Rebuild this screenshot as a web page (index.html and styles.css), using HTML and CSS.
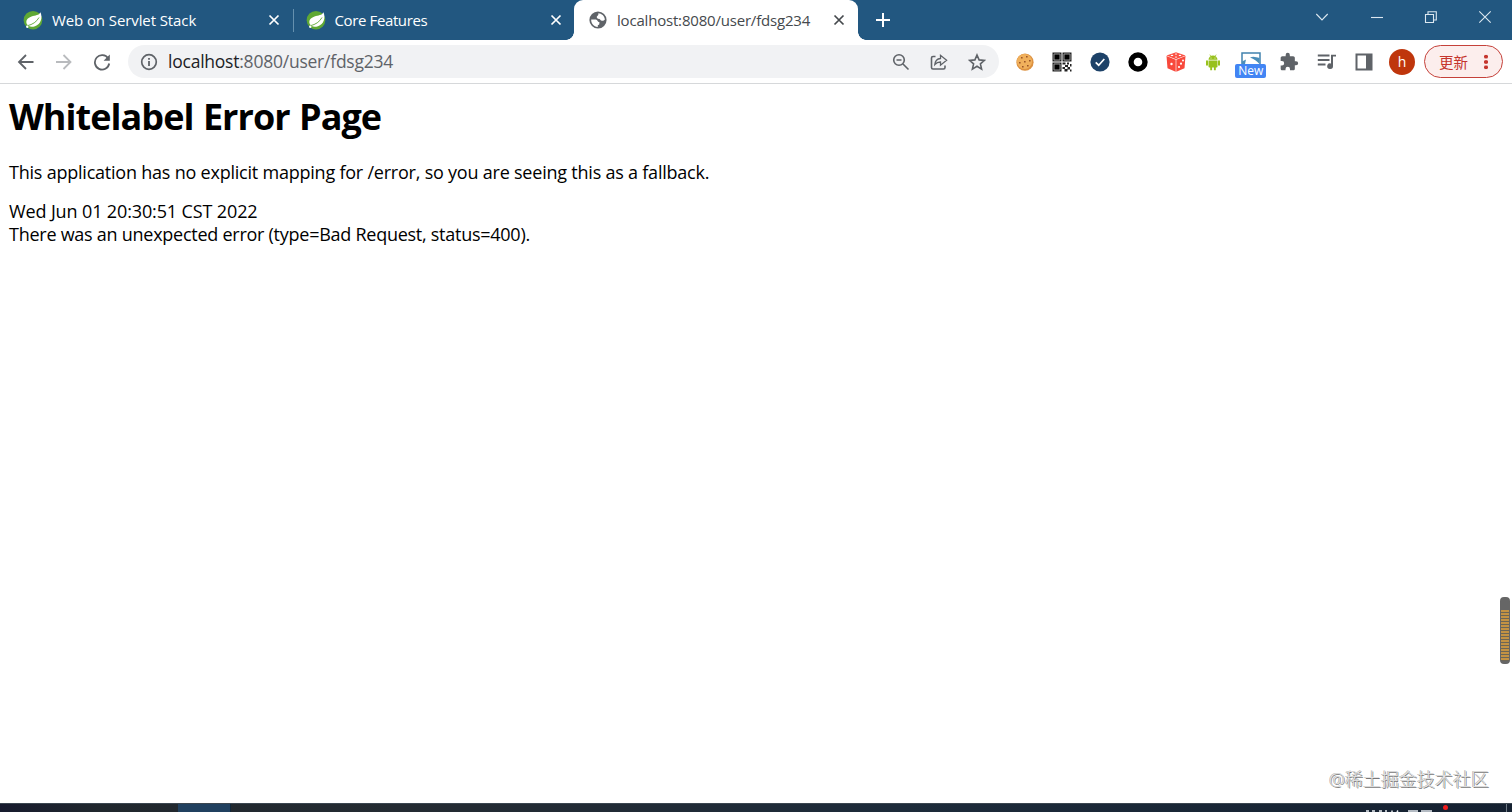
FILE: index.html
```
<!DOCTYPE html>
<html lang="en">
<head>
  <meta charset="UTF-8">
  <meta name="viewport" content="width=device-width, initial-scale=1.0">
  <title>localhost:8080/user/fdsg234</title>
  <link rel="stylesheet" href="styles.css">
</head>
<body>
  <svg class="defs">
    <symbol id="spring" viewBox="0 0 20 20">
      <circle cx="10" cy="10.200" r="9.300" fill="#5fa834"/>
      <path d="M17.500 2.200C15.800 5.600 12.500 5 8.500 6.500C4 8 2.300 11.200 4 14.300C5.200 16.800 8.500 17.200 12 16.200C17.900 14 19.800 8 17.500 2.200Z" fill="#fff"/>
      <path d="M4.500 15.700C9.500 14.500 13.500 12 16 7.500" fill="none" stroke="#5fa834" stroke-width=".9"/>
      <circle cx="4.300" cy="16.800" r="1.200" fill="#fff"/>
    </symbol>
    <symbol id="cross" viewBox="0 0 12 12">
      <path d="M1.500 1.500L10.500 10.500M10.500 1.500L1.500 10.500" fill="none" stroke="currentColor" stroke-width="1.700"/>
    </symbol>
  </svg>

  <div class="tabs">
    <div class="tab">
      <svg class="favicon"><use href="#spring"/></svg>
      <span class="title t1">Web on Servlet Stack</span>
      <svg class="close"><use href="#cross"/></svg>
    </div>
    <div class="tab line">
      <svg class="favicon"><use href="#spring"/></svg>
      <span class="title t2">Core Features</span>
      <svg class="close"><use href="#cross"/></svg>
    </div>
    <div class="tab active">
      <svg class="favicon" viewBox="0 0 20 20">
        <circle cx="10" cy="10" r="8.600" fill="#5f6368"/>
        <path d="M3.200 9.500H7.800C9.800 9.700 9.200 12 11.500 12.300L11.200 14.500L9.800 15.200V16.900C5.800 16.700 3 13.500 3.200 9.500Z" fill="#fff"/>
        <path d="M10.300 3.300C13.700 3.500 16.500 6 16.900 9.500C15.500 11.500 13 11 12.300 9.700C11.600 8.500 8.800 9 8.800 7.200C8.800 5.500 10.800 6 10.300 3.300Z" fill="#fff"/>
      </svg>
      <span class="title t3">localhost:8080/user/fdsg234</span>
      <svg class="close"><use href="#cross"/></svg>
    </div>
    <svg class="plus" viewBox="0 0 14 14"><path d="M7 0V14M0 7H14" stroke="#fff" stroke-width="2"/></svg>
    <div class="window-buttons">
      <svg viewBox="0 0 14 14"><path d="M1.300 4L7 10L12.700 4"/></svg>
      <svg viewBox="0 0 14 14"><path d="M1 7.500H13"/></svg>
      <svg viewBox="0 0 14 14"><path d="M1.500 4.500H9.500V12.500H1.500ZM4 4.500V1.800H12.300V10H9.500"/></svg>
      <svg viewBox="0 0 14 14"><path d="M1.300 1.300L12.700 12.700M12.700 1.300L1.300 12.700"/></svg>
    </div>
  </div>

  <div class="toolbar">
    <div class="nav">
      <svg viewBox="0 0 18 18" stroke="#5f6368"><path d="M16.500 9H2M9 2L2 9L9 16"/></svg>
      <svg viewBox="0 0 18 18" stroke="#b9bbbe"><path d="M1 9H15.500M8.500 2L15.500 9L8.500 16"/></svg>
      <svg viewBox="0 0 18 18" stroke="#5f6368"><path d="M15.200 5.500A7.200 7.200 0 1 0 16.200 10.500"/><path d="M16.800 1.500V7.700H10.600Z" fill="#5f6368" stroke="none"/></svg>
    </div>
    <div class="address">
      <svg class="info" viewBox="0 0 18 18"><circle cx="9" cy="9" r="7.300" fill="none" stroke="#5f6368" stroke-width="1.700"/><path d="M9 8V13M9 4.900V6.700" stroke="#5f6368" stroke-width="1.800"/></svg>
      <span class="url"><b>localhost</b>:8080/user/fdsg234</span>
      <div class="actions">
        <svg viewBox="0 0 18 18"><circle cx="7" cy="7" r="5.300"/><path d="M11 11L16.500 16.500M4.500 7H9.500"/></svg>
        <svg viewBox="0 0 18 18"><path d="M5.500 3.500H3A1.500 1.500 0 0 0 1.500 5V14.500A1.500 1.500 0 0 0 3 16H13.500A1.500 1.500 0 0 0 15 14.500V12.500"/><path d="M4.800 11.500C5.200 7.500 7.500 5.800 10.500 5.500V2.300L16.600 7.300L10.500 12.200V9C8 9 6.300 9.800 4.800 11.500Z" stroke-width="1.300"/></svg>
        <svg viewBox="0 0 18 18"><path d="M9 2L11.100 6.900L16.400 7.400L12.400 10.900L13.600 16.100L9 13.300L4.400 16.100L5.600 10.900L1.600 7.400L6.900 6.900Z"/></svg>
      </div>
    </div>
    <div class="extensions">
      <div><svg viewBox="0 0 20 20">
        <circle cx="10" cy="10.200" r="8.600" fill="#dc9140"/><circle cx="9.500" cy="9.500" r="7.600" fill="#f0b05c"/>
        <path d="M6 5h1.600v1.600H6zM11 4h1.600v1.600h-1.600zM4 10h1.600v1.600H4zM9 9h1.600v1.600H9zM14 8h1.600v1.600h-1.600zM7 14h1.600v1.600H7zM12 13h1.600v1.600h-1.600z" fill="#9a5426"/>
      </svg></div>
      <div><svg viewBox="0 0 20 20">
        <path d="M.5.500H9.500V9.500H.5ZM10.500.500H19.500V9.500H10.500ZM.5 10.500H9.500V19.500H.5Z" fill="#222"/>
        <path d="M2 2H8V8H2ZM12 2H18V8H12ZM2 12H8V18H2Z" fill="#000" stroke="#999" stroke-width="1"/>
        <path d="M10.500 10.500h3v2h-3zM15 10.500h2v2h-2zM18 12h1.500v2.500H18zM13 13h3v2h-3zM10.500 15h2.500v2h-2.500zM15.500 15h2.500v2.500h-2.500zM12.500 17h3v2.500h-3zM18 17.500h1.500v2H18z" fill="#222"/>
      </svg></div>
      <div><svg viewBox="0 0 20 20"><circle cx="10" cy="10" r="9.600" fill="#1d4268"/><path d="M5.700 10.300L8.700 13.200L14.300 7" fill="none" stroke="#fff" stroke-width="1.700"/></svg></div>
      <div><svg viewBox="0 0 20 20"><circle cx="10" cy="10" r="7" fill="#fff" stroke="#000" stroke-width="5.400"/></svg></div>
      <div><svg viewBox="0 0 20 20">
        <path d="M10 .3L19.500 3.400L10 7.200L.5 3.400Z" fill="#fb5144"/>
        <path d="M.5 4L9.700 7.700V19.800L1.500 16.300Z" fill="#f8493c"/>
        <path d="M19.500 4L10.300 7.700V19.800L18.500 16.300Z" fill="#f8493c"/>
        <g fill="#fff"><ellipse cx="6" cy="3.400" rx="1.300" ry=".7"/><ellipse cx="10" cy="2" rx="1.200" ry=".6"/><ellipse cx="14" cy="3.400" rx="1.300" ry=".7"/><ellipse cx="10" cy="5" rx="1.200" ry=".6"/><circle cx="5.500" cy="12" r="1.200"/><circle cx="13" cy="15" r="1.100"/><circle cx="15" cy="11.700" r="1.100"/><circle cx="17" cy="8.500" r="1"/></g>
      </svg></div>
      <div><svg viewBox="0 0 20 20" fill="#98c11d">
        <path d="M5.500 7.700A4.500 4.300 0 0 1 14.500 7.700ZM5.500 8.400H14.500V14.500A1 1 0 0 1 13.500 15.500H12.800V18.200H10.900V15.500H9.100V18.200H7.200V15.500H6.500A1 1 0 0 1 5.500 14.500Z"/>
        <rect x="3" y="8.300" width="2" height="5.500" rx="1"/><rect x="15" y="8.300" width="2" height="5.500" rx="1"/>
        <path d="M6.800 2.600L8 4.500M13.200 2.600L12 4.500" stroke="#98c11d" stroke-width=".7"/><circle cx="8" cy="6" r=".5" fill="#fff"/><circle cx="12" cy="6" r=".5" fill="#fff"/>
      </svg></div>
      <div class="picture"><svg viewBox="0 0 20 20">
        <path d="M1 1H19V13H1Z" fill="#fff" stroke="#4183ae" stroke-width="1.500"/>
        <path d="M1 12V9.500L5 7.500L4 12ZM9 5.500C13 4 15 5.500 18.500 6V12C16 9 13 7 9 5.500Z" fill="#4b8eb9"/>
      </svg><span class="badge">New</span></div>
      <div><svg viewBox="0 0 24 24"><path fill="#5f6368" d="M20.500 11H19V7c0-1.100-.9-2-2-2h-4V3.500a2.500 2.500 0 0 0-5 0V5H4c-1.100 0-2 .9-2 2v3.800h1.500a2.700 2.700 0 0 1 0 5.400H2V20c0 1.100.9 2 2 2h3.800v-1.500a2.700 2.700 0 0 1 5.400 0V22H17c1.100 0 2-.9 2-2v-4h1.500a2.500 2.500 0 0 0 0-5z"/></svg></div>
      <div><svg viewBox="0 0 20 20"><path d="M.8 3.500H12.500M.8 8H12.500M.8 12.500H8.500" stroke="#5f6368" stroke-width="1.800"/><path d="M14 2.700H19V4.600H16V14A2.900 2.900 0 1 1 14 11.400Z" fill="#5f6368"/></svg></div>
      <div><svg viewBox="0 0 20 20"><path d="M2.500 2.500H17.500V17.500H2.500Z" fill="none" stroke="#5f6368" stroke-width="2"/><path d="M12 2H18V18H12Z" fill="#5f6368"/></svg></div>
      <div><span class="avatar">h</span></div>
    </div>
    <div class="update"><span>更新</span><i></i></div>
  </div>

  <div class="page">
    <h1>Whitelabel Error Page</h1>
    <p class="mapping">This application has no explicit mapping for /error, so you are seeing this as a fallback.</p>
    <div class="created">Wed Jun 01 20:30:51 CST 2022</div>
    <div class="reason">There was an unexpected error (type=Bad Request, status=400).</div>
    <div class="meter"></div>
    <div class="watermark">@稀土掘金技术社区</div>
  </div>

  <div class="taskbar">
    <div class="task"></div>
    <svg class="clock" viewBox="0 0 70 8"><path d="M1 7H4M7 7H10M14 7H17M20 7H22M27 6.500V8M33 6.500L32 8M43 7H53M56 7H67"/></svg>
    <div class="dot"></div>
    <div class="edge"></div>
  </div>
</body>
</html>
```

FILE: styles.css
```
*{
  box-sizing: border-box;
}
body{
  margin: 0;
  height: 812px;
  display: flex;
  flex-direction: column;
  overflow: hidden;
  background-color: #fff;
  font-family: "Open Sans", "Noto Sans CJK SC", sans-serif;
}
svg{
  display: block;
  flex: none;
}
.defs{
  display: none;
}

/* tab strip */
.tabs{
  height: 40px;
  flex: none;
  display: flex;
  align-items: center;
  padding-left: 9px;
  background-color: #225780;
  color: #fff;
}
.tab{
  width: 282.5px;
  height: 40px;
  flex: none;
  display: flex;
  align-items: center;
  padding: 0 12px 0 14px;
}
.line{
  background: linear-gradient(#6590ae, #6590ae) 1px 9px / 1px 23px no-repeat;
}
.favicon{
  width: 20px;
  height: 20px;
}
.title{
  flex: 1;
  margin-left: 9px;
  font-size: 15px;
  line-height: 20px;
  white-space: nowrap;
}
.t1{
  letter-spacing: -.1px;
}
.t2{
  letter-spacing: -.38px;
}
.t3{
  letter-spacing: -.19px;
}
.close{
  width: 12px;
  height: 12px;
}
.active{
  position: relative;
  width: 284px;
  padding-right: 13px;
  background-color: #fff;
  border-radius: 9px 9px 0 0;
  color: #45494d;
}
.active::before, .active::after{
  content: "";
  position: absolute;
  bottom: 0;
  width: 8px;
  height: 8px;
}
.active::before{
  left: -8px;
  background: radial-gradient(circle at 0 0, transparent 7.5px, #fff 8px);
}
.active::after{
  right: -8px;
  background: radial-gradient(circle at 100% 0, transparent 7.5px, #fff 8px);
}
.plus{
  width: 14px;
  height: 14px;
  margin-left: 18px;
}
.window-buttons{
  display: flex;
  gap: 40.200px;
  margin: -7px 20px 0 auto;
}
.window-buttons svg{
  width: 14px;
  height: 14px;
  fill: none;
  stroke: #dce8f0;
  stroke-width: 1.100;
}

/* toolbar */
.toolbar{
  height: 44px;
  flex: none;
  display: flex;
  align-items: center;
  border-bottom: 1px solid #d6d8da;
}
.nav{
  width: 128px;
  display: flex;
  gap: 20px;
  padding-left: 17px;
}
.nav svg{
  width: 18px;
  height: 18px;
  fill: none;
  stroke-width: 1.800;
}
.address{
  width: 871px;
  height: 33px;
  display: flex;
  align-items: center;
  padding: 0 13px 0 12px;
  border-radius: 17px;
  background-color: #f1f2f4;
}
.info{
  width: 18px;
  height: 18px;
}
.url{
  margin: -1px 0 0 10px;
  font-size: 17.500px;
  letter-spacing: -.23px;
  color: #5f6368;
}
.url b{
  font-weight: normal;
  color: #202124;
}
.actions{
  display: flex;
  gap: 20px;
  margin-left: auto;
}
.actions svg{
  width: 18px;
  height: 18px;
  fill: none;
  stroke: #5f6368;
  stroke-width: 1.600;
}
.extensions{
  display: flex;
  margin-left: 6.750px;
}
.extensions div{
  width: 37.750px;
  height: 33px;
  display: flex;
  align-items: center;
  justify-content: center;
}
.extensions svg{
  width: 20px;
  height: 20px;
}
.picture{
  position: relative;
}
.badge{
  position: absolute;
  left: 3px;
  top: 19px;
  width: 31px;
  height: 14px;
  border-radius: 2px;
  background-color: #4285f4;
  color: #fff;
  font-size: 12px;
  line-height: 14px;
  text-align: center;
}
.avatar{
  width: 26px;
  height: 26px;
  border-radius: 50%;
  background-color: #bf360c;
  color: #fff;
  font-size: 14px;
  line-height: 26px;
  text-align: center;
}
.update{
  width: 79px;
  height: 33px;
  display: flex;
  align-items: center;
  margin-left: 3px;
  padding-left: 14px;
  border: 1.500px solid #c5413a;
  border-radius: 17px;
  background-color: #fceeed;
  color: #c5352d;
  font-size: 14.500px;
}
.update i{
  width: 4px;
  height: 16px;
  margin-left: 16px;
  background: radial-gradient(circle, #c5352d 1.800px, transparent 2.200px) 0 0 / 4px 5.333px;
}

/* error page */
.page{
  flex: 1;
  position: relative;
  padding: 8px 9px;
  color: #000;
  font-size: 18px;
  line-height: 23px;
}
.page > *{
  white-space: nowrap;
}
h1{
  margin: 0 0 20px;
  font-size: 36px;
  line-height: 49px;
  letter-spacing: -.96px;
  word-spacing: 1px;
}
.mapping{
  margin: 0 0 16px;
  letter-spacing: -.22px;
}
.created{
  letter-spacing: -.13px;
}
.reason{
  letter-spacing: -.26px;
}
.meter{
  position: absolute;
  right: 2px;
  top: 513px;
  width: 10px;
  height: 67px;
  border: 1px solid #666;
  border-top-width: 13px;
  border-bottom-width: 3px;
  border-radius: 4px;
  background: repeating-linear-gradient(#c39243 0 2px, #6d6655 2px 3px);
}
.watermark{
  position: absolute;
  right: 23px;
  bottom: 12px;
  font-size: 18px;
  font-weight: 300;
  color: #e4e4e4;
  text-shadow: -.5px -.5px 0 #999, .7px .7px 0 #777;
}

/* top edge of the desktop taskbar */
.taskbar{
  height: 9px;
  flex: none;
  position: relative;
  display: flex;
  overflow: hidden;
  border-top: 1px solid #3b4650;
  background: linear-gradient(90deg, #171b2e, #20272d 100px, #242b32 400px, #1d2b3a 900px, #152131);
}
.task{
  width: 53px;
  margin-left: 178px;
  background-color: #20405f;
  border-right: 1px solid #10263a;
}
.clock{
  width: 70px;
  height: 8px;
  margin-left: 1134px;
  fill: none;
  stroke: #e8edf2;
  stroke-width: 1.500;
}
.dot{
  position: absolute;
  right: 64px;
  top: 1px;
  width: 5px;
  height: 5px;
  border-radius: 50%;
  background-color: #f01d1d;
}
.edge{
  width: 1px;
  margin: 0 5px 0 auto;
  background-color: #707b86;
}
```
